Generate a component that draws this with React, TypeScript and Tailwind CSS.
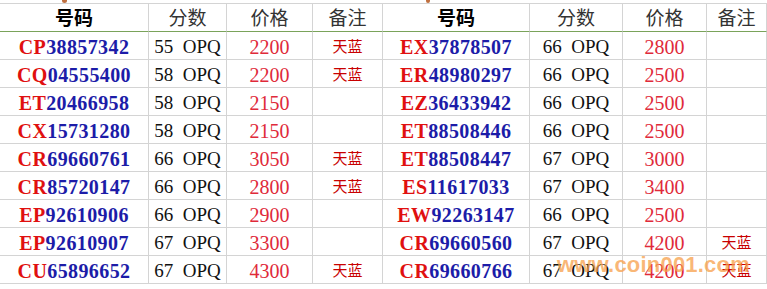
import React from "react";

type Row = { code: string; score: string; price: string; note: string };

const left: Row[] = [
  { code: "CP38857342", score: "55", price: "2200", note: "天蓝" },
  { code: "CQ04555400", score: "58", price: "2200", note: "天蓝" },
  { code: "ET20466958", score: "58", price: "2150", note: "" },
  { code: "CX15731280", score: "58", price: "2150", note: "" },
  { code: "CR69660761", score: "66", price: "3050", note: "天蓝" },
  { code: "CR85720147", score: "66", price: "2800", note: "天蓝" },
  { code: "EP92610906", score: "66", price: "2900", note: "" },
  { code: "EP92610907", score: "67", price: "3300", note: "" },
  { code: "CU65896652", score: "67", price: "4300", note: "天蓝" },
];

const right: Row[] = [
  { code: "EX37878507", score: "66", price: "2800", note: "" },
  { code: "ER48980297", score: "66", price: "2500", note: "" },
  { code: "EZ36433942", score: "66", price: "2500", note: "" },
  { code: "ET88508446", score: "66", price: "2500", note: "" },
  { code: "ET88508447", score: "67", price: "3000", note: "" },
  { code: "ES11617033", score: "67", price: "3400", note: "" },
  { code: "EW92263147", score: "66", price: "2500", note: "" },
  { code: "CR69660560", score: "67", price: "4200", note: "天蓝" },
  { code: "CR69660766", score: "67", price: "4200", note: "天蓝" },
];

const serif = { fontFamily: '"Liberation Serif", "Noto Sans CJK SC", serif' };
const cjk = { fontFamily: '"Noto Sans CJK SC", "Liberation Sans", sans-serif' };

const cell = "flex items-center justify-center border-r border-b border-[#d4d4d4] h-[28px]";
const head = "flex items-center justify-center border-r border-b border-b-[#7aa35a] border-r-[#d4d4d4] h-[28px]";

function Header() {
  return (
    <>
      <div className={head}>
        <span className="text-[19px] font-bold text-black" style={cjk}>号码</span>
      </div>
      <div className={head}>
        <span className="text-[19px] text-[#333]" style={cjk}>分数</span>
      </div>
      <div className={head}>
        <span className="text-[19px] text-[#333]" style={cjk}>价格</span>
      </div>
      <div className={head}>
        <span className="text-[19px] text-[#333]" style={cjk}>备注</span>
      </div>
    </>
  );
}

function Cells({ r }: { r: Row }) {
  return (
    <>
      <div className={cell + " pt-[3px]"}>
        <span className="text-[20px] font-bold tracking-[0.4px]" style={serif}>
          <span className="text-[#e01010]">{r.code.slice(0, 2)}</span>
          <span className="text-[#1c1ca8]">{r.code.slice(2)}</span>
        </span>
      </div>
      <div className={cell + " pt-[3px]"}>
        <span className="text-[19px] text-[#111] whitespace-pre" style={serif}>
          {r.score + "  OPQ"}
        </span>
      </div>
      <div className={cell + " pt-[3px]"}>
        <span className="text-[20px] text-[#e02a3a]" style={serif}>{r.price}</span>
      </div>
      <div className={cell + " pt-[1px]"}>
        <span className="text-[15px] text-[#c80000]" style={cjk}>{r.note}</span>
      </div>
    </>
  );
}

export default function App() {
  return (
    <div className="relative w-[767px] h-[289px] bg-white overflow-hidden">
      <div className="flex h-[4px] border-b border-[#d4d4d4]">
        <div className="ml-[62px] w-[5px] h-[3px] bg-[#c07040] rounded-b" />
        <div className="ml-[359px] w-[4px] h-[3px] bg-[#c07040] rounded-b" />
      </div>
      <div className="grid grid-cols-[149px_78px_86px_70px_147px_93px_84px_60px]">
        <Header />
        <Header />
        {left.map((r, i) => (
          <React.Fragment key={i}>
            <Cells r={r} />
            <Cells r={right[i]} />
          </React.Fragment>
        ))}
      </div>
      <div
        className="absolute left-[557px] top-[248px] text-[22px] font-bold tracking-[0.2px] text-[#f7a04a]/75 pointer-events-none"
        style={{ fontFamily: '"Liberation Sans", Arial, sans-serif' }}
      >
        www.coin001.com
      </div>
    </div>
  );
}
